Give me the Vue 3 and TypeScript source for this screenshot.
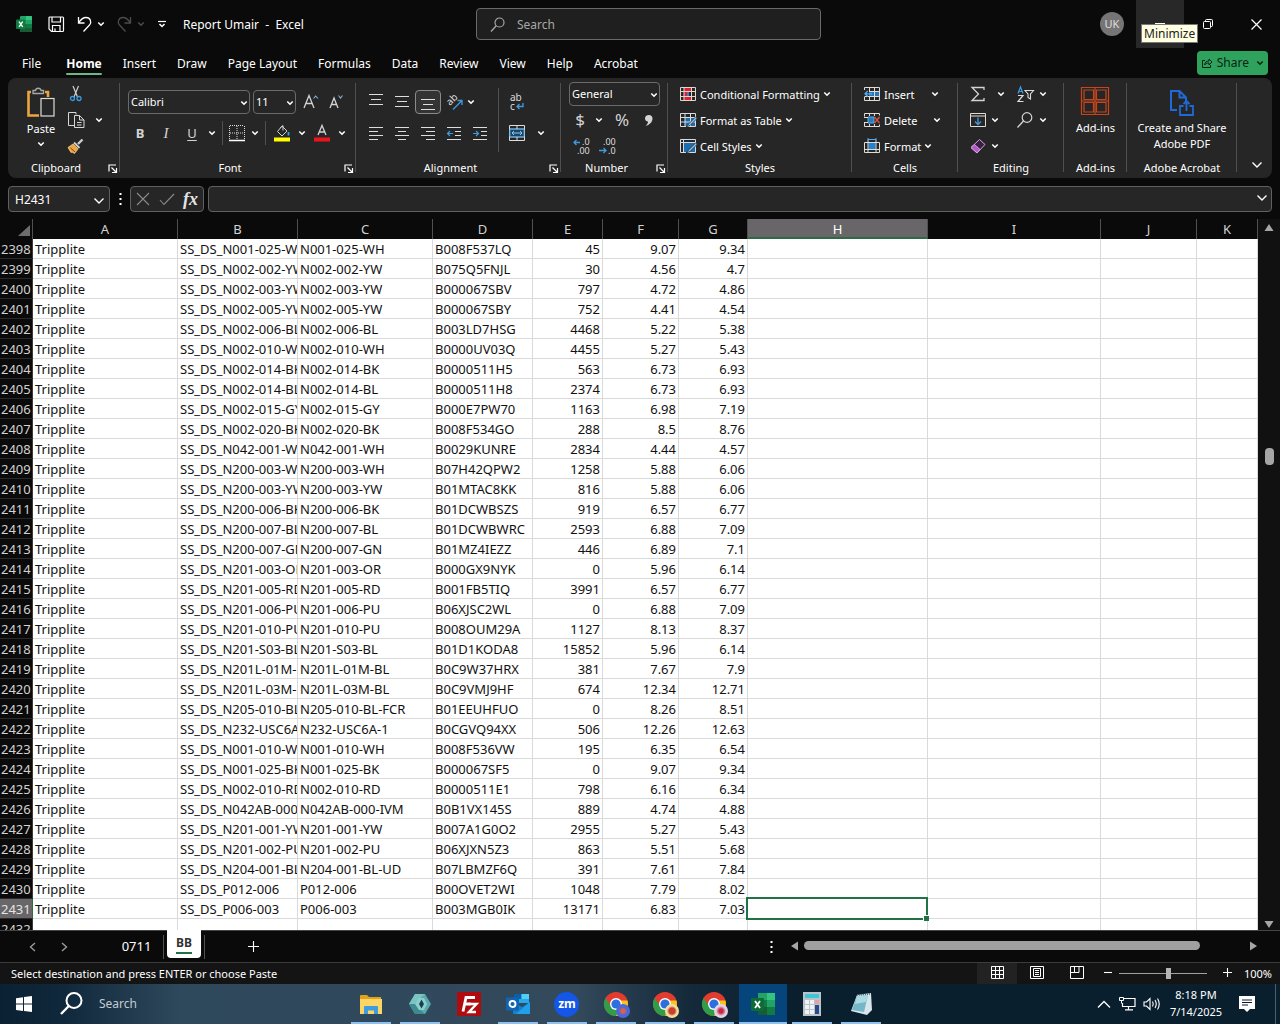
<script setup lang="ts">
import { h, ref } from 'vue'

const glyphs: Record<string, string> = {
  chev: '<path d="M1.300 1.500 4 4.200 6.700 1.500" stroke-width="1.600"/>',
  bigchev: '<path d="M1.500 1.500 6 6l4.500-4.500" stroke-width="1.400"/>',
  excel: '<rect x="4" y="0" width="12" height="16" rx="1" fill="#21a366" stroke="none"/><path d="M4 8h6v8H5q-1 0-1-1z" fill="#185c37" stroke="none"/><path d="M10 8h6v4h-6z" fill="#107c41" stroke="none"/><path d="M10 12h6v3q0 1-1 1h-5z" fill="#185c37" stroke="none"/><path d="M10 0h5q1 0 1 1v3h-6z" fill="#33c481" stroke="none"/><rect x="0" y="3.500" width="9.500" height="9.500" rx="1" fill="#107c41" stroke="none"/><path d="M3 5.700 6.700 10.800M6.700 5.700 3 10.800" stroke="#fff" stroke-width="1.400"/>',
  save: '<path d="M1 2q0-1 1-1h12.500q1 0 1 1v12.500q0 1-1 1H3.500L1 13z M4 1v5h8.500V1 M4.500 15.500v-6h7.500v6 M7 15.500v-3" stroke-width="1.200"/>',
  undo: '<path d="M1.500 1v6h6 M1.800 6.500C4.500 2.500 7 1.500 9 1.500c4.500 0 6 4.500 3.500 7.500L6.500 15.500" stroke-width="1.300"/>',
  redo: '<path d="M13.500 1v6h-6 M13.200 6.500C10.500 2.500 8 1.500 6 1.500c-4.500 0-6 4.500-3.500 7.500L8.500 15.500" stroke-width="1.300"/>',
  custom: '<path d="M1 1.500h8" stroke-width="1.200"/><path d="M2.500 4 5 6.500 7.500 4" stroke-width="1.500"/>',
  search: '<circle cx="9.500" cy="5.500" r="4.500" stroke-width="1.200"/><path d="M6.200 8.800 1 14.500" stroke-width="1.300"/>',
  minimize: '<path d="M0 .5h10"/>',
  restore: '<rect x=".5" y="2.500" width="7" height="7" rx="1"/><path d="M2.500 2.500V1.500q0-1 1-1h5q1 0 1 1v5q0 1-1 1h-1"/>',
  close: '<path d="M.5.5l10 10M10.500.5l-10 10" stroke-width="1.200"/>',
  share: '<path d="M4 3.500H1.500v7h8V8 M3.500 8C4 5 5.500 4 8 4V2l3 3-3 3V6C6 6 4.500 6.500 3.500 8z" stroke-width="1"/>',
  paste: '<path d="M5 5H2.500v23.500H13 M19 5h3v5" stroke="#eda63f" stroke-width="2.600"/><path d="M7 6V3.500h2.500C10 .500 14.500.500 15 3.500h2.500V6.500H7z" stroke="#a8a8a8" stroke-width="1.300" fill="#262626"/><rect x="15" y="11.500" width="13" height="17.500" stroke="#dcdcdc" stroke-width="1.200" fill="#262626"/>',
  cut: '<path d="M5 0 9.500 11M10.500 0 6 11" stroke="#d0d0d0" stroke-width="1.200"/><circle cx="4.500" cy="12.500" r="2" stroke="#3d9be0" stroke-width="1.300"/><circle cx="11" cy="12.500" r="2" stroke="#3d9be0" stroke-width="1.300"/>',
  copy: '<path d="M7 13.500H.5V.5h7.500v2 M6.500 3.500h5L16 8v7.500H6.500z M11.500 3.500V8H16 M9 10.500h4.500M9 13h4.500" stroke="#d8d8d8"/>',
  painter: '<path d="M14.500 1.500 10 6" stroke="#ccc" stroke-width="2.400"/><path d="M6 4.500 11.500 10" stroke="#ccc" stroke-width="2"/><path d="M5 6 10 11 6.500 15.500 4 14 3 14.500 0 9.500z" fill="#eda63f" stroke="#f3c98a" stroke-width=".8"/><path d="M2.500 10 7 14" stroke="#6a4a1c"/>',
  grow: '<path d="M1 14 6 1.500 11 14M2.800 9.500h6.500" stroke="#d4d4d4" stroke-width="1.300"/><path d="M10.500 4.500l2.200-2.500L15 4.500" stroke="#7db4de" stroke-width="1.100"/>',
  shrink: '<path d="M1 14 5 4l4 10M2.500 10.500h5" stroke="#d4d4d4" stroke-width="1.300"/><path d="M9.500 1.500 11.500 4l2-2.500" stroke="#7db4de" stroke-width="1.100"/>',
  borders: '<path d="M1 .5h14M1 8h14M.5 1v14M8 1v14M15.500 1v14" stroke="#ddd" stroke-dasharray="1 1"/><path d="M0 15.500h16" stroke="#fff" stroke-width="1.500"/>',
  fill: '<path d="M8 1 13 6 8 11 3.500 6.500z M6 3l3-2.500v5" stroke="#d0d0d0"/><path d="M14.500 7v3.500" stroke="#3d9be0" stroke-width="1.800"/><path d="M0 14.500h16" stroke="#ff0" stroke-width="4"/>',
  color: '<path d="M4 10 8 .500 12 10M5.500 7h5" stroke="#d4d4d4" stroke-width="1.300"/><path d="M0 14.500h16" stroke="#f0121c" stroke-width="4"/>',
  top: '<path d="M1 2.500h14M3 7.500h10M1 12.500h14" stroke="#ddd" stroke-width="1.200"/>',
  left: '<path d="M1 2.500h14M1 6.500h9M1 10.500h14M1 14.500h9" stroke="#ddd" stroke-width="1.200"/>',
  center: '<path d="M1 2.500h14M4 6.500h8M1 10.500h14M4 14.500h8" stroke="#ddd" stroke-width="1.200"/>',
  right: '<path d="M1 2.500h14M6 6.500h9M1 10.500h14M6 14.500h9" stroke="#ddd" stroke-width="1.200"/>',
  outdent: '<path d="M1 2.500h14M9 6.500h6M9 10.500h6M1 14.500h14" stroke="#ddd" stroke-width="1.200"/><path d="M7 8.500H1.500M4 6 1.500 8.500 4 11" stroke="#3d9be0" stroke-width="1.200"/>',
  indent: '<path d="M1 2.500h14M9 6.500h6M9 10.500h6M1 14.500h14" stroke="#ddd" stroke-width="1.200"/><path d="M1 8.500h5.500M4 6l2.500 2.500L4 11" stroke="#3d9be0" stroke-width="1.200"/>',
  orient: '<text font-size="10" font-family="Noto Sans, sans-serif" fill="#ddd" stroke="none" transform="translate(4 12) rotate(-45)">ab</text><path d="M7 15.500 15.500 7M11.500 6.500h4.500v4.500" stroke="#3d9be0" stroke-width="1.300"/>',
  wrap: '<text x="1" y="7" font-size="10" font-family="Noto Sans, sans-serif" fill="#ddd" stroke="none">ab</text><text x="1" y="16" font-size="10" font-family="Noto Sans, sans-serif" fill="#ddd" stroke="none">c</text><path d="M14 9v3.500H8M10.500 10 8 12.500 10.500 15" stroke="#3d9be0" stroke-width="1.300"/>',
  merge: '<path d="M.5.5h15v15H.5z M8 0v4M8 12v4 M.5 4h15M.5 12h15" stroke="#ddd"/><path d="M1 4.500h14v7H1z" fill="#17466b" stroke="#3d9be0"/><path d="M3 8h10M5 6 3 8l2 2M11 6l2 2-2 2" stroke="#8fc8f2"/>',
  comma: '<path d="M5 1C2.500 1 1 2.500 1 4.500s1.500 3 3 3c0 2-1 3-2.500 4.500 4-1 7-4 7-7.500C8.500 2.500 7 1 5 1z" fill="#d4d4d4" stroke="none"/>',
  decInc: '<path d="M7 4.500H1M3.500 2 1 4.500 3.500 7" stroke="#3d9be0" stroke-width="1.300"/><text x="9" y="7" font-size="9" font-family="Noto Sans, sans-serif" fill="#ddd" stroke="none">.0</text><text x="4" y="16" font-size="9" font-family="Noto Sans, sans-serif" fill="#ddd" stroke="none">.00</text>',
  decDec: '<path d="M0 12.500h7M4.500 10 7 12.500 4.500 15" stroke="#3d9be0" stroke-width="1.300"/><text x="4" y="7" font-size="9" font-family="Noto Sans, sans-serif" fill="#ddd" stroke="none">.00</text><text x="9" y="16" font-size="9" font-family="Noto Sans, sans-serif" fill="#ddd" stroke="none">.0</text>',
  cond: '<path d="M4 1h7v4H4zM4 11h7v4H4z" fill="#e0202c" stroke="none"/><path d="M4 5.500h3v5H4z" fill="#e0202c" stroke="none"/><path d="M7 5.500h2v5H7z" fill="#2f86cc" stroke="none"/><path d="M.5 1.500h15v13H.5z M4 1v14M11.500 1v14M.5 5.500h15M.5 10.500h15" stroke="#e2d6d2"/>',
  table: '<path d="M5 5h10v9H5z" fill="#1c6cb0" stroke="none"/><path d="M.5 1.500h15v13H.5z M5 1v14M10.500 1v14M.5 5.500h15M.5 10h15" stroke="#d8dce0"/><path d="M16 4.500 9 11.500l-3 3.500 4-1.500L16.500 7" fill="#8cc4ee" stroke="#262626" stroke-width=".8"/>',
  style: '<path d="M3 4h12v10H3z" fill="#1c6cb0" stroke="none"/><path d="M.5 1.500h15v13H.5z M3.500 1v14M.5 4.500h15" stroke="#d8dce0"/><path d="M16 4.500 9 11.500l-3 3.500 4-1.500L16.500 7" fill="#8cc4ee" stroke="#262626" stroke-width=".8"/>',
  insert: '<path d="M5 5h10.500v5H5z" fill="#2a78ba" stroke="none"/><path d="M.5 4V1.500h15v13H.5V11M5.500 1.500V5M10.500 1v14M5.500 10v4.500M5 5.500h10.500M.5 10.500h15" stroke="#e2dcd6"/><path d="M8 7.800H1M3.800 5 1 7.800l2.800 2.700" stroke="#53acf0" stroke-width="1.300"/>',
  delete: '<path d="M4 5h6v6H4z" fill="#2a78ba" stroke="#53acf0"/><path d="M.5 4.500v-3h15v2M.5 11v3.500h15v-2M5.500 1.500V4M10.500 1.500V4M5.500 12v2.500M10.500 12v2.500M0 5.500h4M0 10.500h4" stroke="#e2dcd6"/><path d="M10.500 5l5 6M15.500 5l-5 6" stroke="#e0533c" stroke-width="1.300"/>',
  format: '<path d="M4.500 5h7v6h-7z" fill="#2182d2" stroke="none"/><path d="M.5 4.500h15v10H.5z M4 2.500v12M12 2.500v12M.5 11.500h15" stroke="#e2dcd6"/><path d="M4 1.500h8M4 0v3M12 0v3" stroke="#53acf0"/>',
  sigma: '<path d="M14 4V1.500H2L8.500 8 2 14.500h12V12" stroke="#d4d4d4" stroke-width="1.300"/>',
  down: '<path d="M.5 1.500h15v13H.5zM.5 4h15" stroke="#e2dcd6"/><path d="M8 5.500V12M5 9.500 8 12.500l3-3" stroke="#3d9be0" stroke-width="1.300"/>',
  eraser: '<path d="M1 9.500 9.500 1.500 15 6.500 7 15z" fill="#3a1f42" stroke="#d9a0e4"/><path d="M1 9.500 4.500 6.500 10 11.500 7 15z" fill="#b45ac6" stroke="#d9a0e4"/>',
  sort: '<path d="M1 7.500 3.500 1 6 7.500M2 5.500h3" stroke="#3d9be0" stroke-width="1.200"/><path d="M1 9.500h5L1 15.500h5.500" stroke="#ddd" stroke-width="1.200"/><path d="M8 4.500h8.500L13.500 8v5l-2.500-1.500V8z" stroke="#ddd" stroke-width="1.100"/>',
  find: '<circle cx="10" cy="5.500" r="4.800" stroke="#d4d4d4" stroke-width="1.200"/><path d="M6.500 9 .5 15.500" stroke="#d4d4d4" stroke-width="1.300"/>',
  addins: '<path d="M.5.5h27v27H.5z M3 3h9.500v9.500H3z M15.500 3H25v9.500h-9.500z M3 15.500h9.500V25H3z M15.500 15.500H25V25h-9.500z M0 14h28M14 0v28" stroke="#c8451c" stroke-width="1.200"/>',
  pdf: '<path d="M7 20H1V1h8.500L16 7.500V11 M9.500 1v6.500H16" stroke="#1f6ad8" stroke-width="2"/><path d="M13.500 16H10v9h13v-9h-3.500 M16.500 21v-9.500M13.500 14l3-3 3 3" stroke="#1f6ad8" stroke-width="1.800"/>',
  launch: '<path d="M1 7.500V1h7 M3.500 3.500 8 8 M8.500 4v4.500H4" stroke-width="1.200"/>',
  cancel: '<path d="M1 1l12 12M13 1 1 13" stroke="#8a8a8a" stroke-width="1.100"/>',
  enter: '<path d="M1 7l4 4.500L15 1" stroke="#8a8a8a" stroke-width="1.100"/>',
  dots: '<path d="M1.500 1v2M1.500 6v2M1.500 11v2" stroke="#fff" stroke-width="2"/>',
  corner: '<path d="M12 0v11H0z" fill="#6d6d6d" stroke="none"/>',
  up: '<path d="M5 1 9.500 8H.5z" fill="#a6a6a6" stroke="none"/>',
  dn: '<path d="M5 8 9.500 1H.5z" fill="#a6a6a6" stroke="none"/>',
  lt: '<path d="M0 5 7 .5v9z" fill="#a6a6a6" stroke="none"/>',
  rt: '<path d="M8 5 1 .5v9z" fill="#a6a6a6" stroke="none"/>',
  prev: '<path d="M6 1 1.500 5 6 9" stroke="#9a9a9a" stroke-width="1.400"/>',
  next: '<path d="M1 1l4.500 4L1 9" stroke="#9a9a9a" stroke-width="1.400"/>',
  plus: '<path d="M0 5.500h11M5.500 0v11" stroke-width="1.100"/>',
  plusSmall: '<path d="M0 4.500h9M4.500 0v9" stroke-width="1.100"/>',
  minus: '<path d="M0 4.500h8" stroke-width="1.100"/>',
  normal: '<path d="M.5.5h12v12H.5z M4.500.5v12M8.500.5v12M.5 4.500h12M.5 8.500h12" stroke="#fff"/>',
  page: '<path d="M.5.5h13v12H.5z M3.500 2.500h7v8h-7z M5 4.500h4M5 6.500h4M5 8.500h4" stroke="#fff"/>',
  break: '<path d="M.5.5h13v12H.5z M4.500.5v6M9 .5v6H.5" stroke="#fff"/>',
  win: '<path d="M0 2.200 7 1.200V7.600H0z M8 1 16 0v7.600H8z M0 8.500h7v6.500L0 14z M8 8.500h8V16l-8-1z" fill="#fff" stroke="none"/>',
  bigsearch: '<circle cx="14" cy="8.500" r="7.500" stroke="#fff" stroke-width="2"/><path d="M8.800 14 1 22" stroke="#fff" stroke-width="2.400"/>',
  folder: '<path d="M1 4q0-1 1-1h6l2 2h12v17H1z" fill="#e3a21a" stroke="none"/><path d="M1 7h22v15H1z" fill="#fbd667" stroke="none"/><path d="M5 22v-7q0-1 1-1h12q1 0 1 1v7h-4v-3.500H9V22z" fill="#3f9be0" stroke="none"/>',
  hex: '<path d="M7 2h10l6 10-6 10H7L1 12z" fill="#5aa9ac" stroke="none"/><path d="M1 12 7 2h10l-6 5-4 5z" fill="#7cc4c2" stroke="none"/><path d="M1 12h6l4 5 6 5H7z" fill="#3f8a92" stroke="none"/><path d="M11 6h5l3 6-3 6h-5l-4-6z" fill="#8ccfce" stroke="none"/><path d="M13.500 7.500 16 12l-2.500 4.500L11 12z" fill="#17434e" stroke="none"/>',
  filezilla: '<path d="M0 0h24v24H0z" fill="#b00c10" stroke="none"/><path d="M6 19.500 9 5.500h9M7.500 12h6" stroke="#fff" stroke-width="2.800"/><path d="M12 12h7.500L12 20h7" stroke="#fff" stroke-width="2.400"/>',
  outlook: '<path d="M8 2h15v9H8z" fill="#28a8ea" stroke="none"/><path d="M8 2h7v5H8z" fill="#0a5fa8" stroke="none"/><path d="M16 2h7v5h-7z" fill="#50d0f5" stroke="none"/><path d="M7 10l9 5 8-5v12H7z" fill="#1480d0" stroke="none"/><path d="M24 10v12H10z" fill="#1fa0e8" stroke="none"/><rect x="0" y="5.500" width="13" height="13" rx="1" fill="#0f64b4" stroke="none"/><circle cx="6.500" cy="12" r="3" stroke="#fff" stroke-width="1.900"/>',
  chrome: '<circle cx="12" cy="12" r="12" fill="#e33b2e" stroke="none"/><path d="M1.600 6A12 12 0 0 0 12 24l5-9-8 2z" fill="#2f9e4a" stroke="none"/><path d="M23.500 8.500A12 12 0 0 1 12 24l5.500-11-3-4.500z" fill="#fac61c" stroke="none"/><circle cx="12" cy="12" r="6" fill="#fff" stroke="none"/><circle cx="12" cy="12" r="4.600" fill="#2b6fe0" stroke="none"/>',
  excelBig: '<path d="M7 1h17v22H7z" fill="#21a366" stroke="none"/><path d="M16 1h8v7h-8z" fill="#33c481" stroke="none"/><path d="M7 8h9v7H7z" fill="#107c41" stroke="none"/><path d="M7 15h17v8H7z" fill="#185c37" stroke="none"/><path d="M16 15h8v8h-8z" fill="#107c41" stroke="none"/><rect x="0" y="6" width="13" height="13" rx="1" fill="#0e6b38" stroke="none"/><path d="M4 9l5 7M9 9l-5 7" stroke="#fff" stroke-width="1.800"/>',
  calc: '<path d="M3 0h18v24H3z" fill="#b9c3c9" stroke="none"/><path d="M5 2h14v4H5z" fill="#3fc6d4" stroke="none"/><path d="M5 8h4v4H5zM10 8h4v4h-4zM5 13h4v4H5zM10 13h4v4h-4zM5 18h4v4H5zM10 18h4v4h-4z" fill="#eef2f4" stroke="none"/><path d="M15 8h4v4h-4z" fill="#e6a0a0" stroke="none"/><path d="M15 13h4v9h-4z" fill="#284a8c" stroke="none"/>',
  notepad: '<path d="M8 3 22 1 23 18 18 23 2 19z" fill="#d6e6ea" stroke="none"/><path d="M8 4 19 3 15 20 3 18z" fill="#76b6c6" stroke="none"/><path d="M8 4l11-1-2 7-11 2z" fill="#a9dbe4" stroke="none"/><path d="M8 3l13-1" stroke="#5c6870" stroke-width="1.500" stroke-dasharray="1 1"/>',
  tray: '<path d="M1 7.500 7 1.500l6 6" stroke="#fff" stroke-width="1.300"/>',
  net: '<path d="M5 1.500h11v8H3.500V6 M9.500 9.500v3M6 12.800h8" stroke="#fff" stroke-width="1.200"/><path d="M.5.5h4v3h-4zM2.500 3.500v3" stroke="#fff"/>',
  vol: '<path d="M1 5h2.500L7 1.500v11L3.500 9H1z M9.500 4.500q1.500 2.500 0 5M12 3q2.500 4 0 8M14.500 1.500q3.500 5.500 0 11" stroke="#fff" stroke-width="1.100"/>',
  note: '<path d="M0 0h16v13h-5l-3 3-3-3H0z" fill="#fff" stroke="none"/><path d="M3 4h10M3 6.500h10M3 9h6" stroke="#0a1f2e"/>',
}

interface IconProps { name: string; w?: number; h?: number }
const Icon = (p: IconProps) => {
  const w = p.w ?? 16
  const hh = p.h ?? 16
  return h('svg', {
    width: w, height: hh, viewBox: `0 0 ${w} ${hh}`,
    fill: 'none', stroke: 'currentColor', 'aria-hidden': 'true', innerHTML: glyphs[p.name],
  })
}
Icon.props = ['name', 'w', 'h']

const tabs = ['File', 'Home', 'Insert', 'Draw', 'Page Layout', 'Formulas', 'Data', 'Review', 'View', 'Help', 'Acrobat']
const columns = ['A', 'B', 'C', 'D', 'E', 'F', 'G', 'H', 'I', 'J', 'K']
const zoom = ref(57)

// SKU suffix, part number, ASIN, stock, cost, price
const source = `
N001-025-WH|N001-025-WH|B008F537LQ|45|9.07|9.34
N002-002-YW|N002-002-YW|B075Q5FNJL|30|4.56|4.7
N002-003-YW|N002-003-YW|B000067SBV|797|4.72|4.86
N002-005-YW|N002-005-YW|B000067SBY|752|4.41|4.54
N002-006-BL|N002-006-BL|B003LD7HSG|4468|5.22|5.38
N002-010-WH|N002-010-WH|B0000UV03Q|4455|5.27|5.43
N002-014-BK|N002-014-BK|B0000511H5|563|6.73|6.93
N002-014-BL|N002-014-BL|B0000511H8|2374|6.73|6.93
N002-015-GY|N002-015-GY|B000E7PW70|1163|6.98|7.19
N002-020-BK|N002-020-BK|B008F534GO|288|8.5|8.76
N042-001-WH|N042-001-WH|B0029KUNRE|2834|4.44|4.57
N200-003-WH|N200-003-WH|B07H42QPW2|1258|5.88|6.06
N200-003-YW|N200-003-YW|B01MTAC8KK|816|5.88|6.06
N200-006-BK|N200-006-BK|B01DCWBSZS|919|6.57|6.77
N200-007-BL|N200-007-BL|B01DCWBWRC|2593|6.88|7.09
N200-007-GN|N200-007-GN|B01MZ4IEZZ|446|6.89|7.1
N201-003-OR|N201-003-OR|B000GX9NYK|0|5.96|6.14
N201-005-RD|N201-005-RD|B001FB5TIQ|3991|6.57|6.77
N201-006-PU|N201-006-PU|B06XJSC2WL|0|6.88|7.09
N201-010-PU|N201-010-PU|B008OUM29A|1127|8.13|8.37
N201-S03-BL|N201-S03-BL|B01D1KODA8|15852|5.96|6.14
N201L-01M-BL|N201L-01M-BL|B0C9W37HRX|381|7.67|7.9
N201L-03M-BL|N201L-03M-BL|B0C9VMJ9HF|674|12.34|12.71
N205-010-BL-FCR|N205-010-BL-FCR|B01EEUHFUO|0|8.26|8.51
N232-USC6A-1|N232-USC6A-1|B0CGVQ94XX|506|12.26|12.63
N001-010-WH|N001-010-WH|B008F536VW|195|6.35|6.54
N001-025-BK|N001-025-BK|B000067SF5|0|9.07|9.34
N002-010-RD|N002-010-RD|B0000511E1|798|6.16|6.34
N042AB-000-IVM|N042AB-000-IVM|B0B1VX145S|889|4.74|4.88
N201-001-YW|N201-001-YW|B007A1G0O2|2955|5.27|5.43
N201-002-PU|N201-002-PU|B06XJXN5Z3|863|5.51|5.68
N204-001-BL-UD|N204-001-BL-UD|B07LBMZF6Q|391|7.61|7.84
P012-006|P012-006|B00OVET2WI|1048|7.79|8.02
P006-003|P006-003|B003MGB0IK|13171|6.83|7.03`
const rows = source.trim().split('\n').map((line, i) => {
  const c = line.split('|')
  return { n: 2398 + i, cells: ['Tripplite', 'SS_DS_' + c[0], ...c.slice(1)] }
})
rows.push({ n: 2432, cells: ['', '', '', '', '', '', ''] })

const apps = [
  { icon: 'folder', label: 'File Explorer', open: true },
  { icon: 'hex', label: 'Browser', open: true },
  { icon: 'filezilla', label: 'FileZilla', open: false },
  { icon: 'outlook', label: 'Outlook', open: true },
  { icon: 'zoom', label: 'Zoom', open: true },
  { icon: 'chrome', label: 'Chrome', open: true, badge: 'blue' },
  { icon: 'chrome', label: 'Chrome', open: true, badge: 'cream' },
  { icon: 'chrome', label: 'Chrome', open: true, badge: 'pink' },
  { icon: 'excelBig', label: 'Excel', open: true, active: true },
  { icon: 'calc', label: 'Calculator', open: true },
  { icon: 'notepad', label: 'Notepad', open: true },
]
</script>

<template>
  <div class="screen">
    <header class="titlebar">
      <div class="quick">
        <Icon name="excel" class="logo" />
        <button class="ic save" aria-label="Save"><Icon name="save" :w="17" :h="17" /></button>
        <button class="ic undo" aria-label="Undo"><Icon name="undo" :w="15" /><Icon name="chev" :w="8" :h="6" /></button>
        <button class="ic redo" aria-label="Redo"><Icon name="redo" :w="15" /><Icon name="chev" :w="8" :h="6" /></button>
        <button class="ic custom" aria-label="Customize toolbar"><Icon name="custom" :w="10" :h="8" /></button>
        <span class="doc">Report Umair&nbsp; -&nbsp; Excel</span>
      </div>
      <label class="finder">
        <Icon name="search" :w="15" :h="15" />
        <input type="text" placeholder="Search" aria-label="Search" />
      </label>
      <div class="window">
        <button class="avatar" aria-label="Account">UK</button>
        <button class="winbtn hover" aria-label="Minimize"><Icon name="minimize" :w="10" :h="3" /><span class="tip">Minimize</span></button>
        <button class="winbtn" aria-label="Restore"><Icon name="restore" :w="10" :h="10" /></button>
        <button class="winbtn" aria-label="Close"><Icon name="close" :w="11" :h="11" /></button>
      </div>
    </header>

    <nav class="tabs">
      <button v-for="t in tabs" :key="t" class="tab" :class="{ on: t === 'Home', file: t === 'File' }">{{ t }}</button>
      <button class="share"><Icon name="share" :w="12" :h="12" />Share<Icon name="chev" :w="8" :h="6" /></button>
    </nav>

    <section class="ribbon">
      <div class="group clipboard">
        <div class="body">
          <button class="big"><Icon name="paste" :w="30" :h="30" /><span>Paste</span><Icon name="chev" :w="8" :h="6" /></button>
          <div class="stack">
            <button class="ic" aria-label="Cut"><Icon name="cut" /></button>
            <button class="ic" aria-label="Copy"><Icon name="copy" /><Icon name="chev" class="far" :w="8" :h="6" /></button>
            <button class="ic" aria-label="Format Painter"><Icon name="painter" /></button>
          </div>
        </div>
        <div class="foot"><span>Clipboard</span><button class="ic" aria-label="Clipboard settings"><Icon name="launch" :w="9" :h="9" /></button></div>
      </div>

      <div class="group font">
        <div class="body two">
          <div class="row">
            <span class="field family"><select aria-label="Font"><option>Calibri</option></select><Icon name="chev" :w="8" :h="6" /></span>
            <span class="field size"><select aria-label="Font size"><option>11</option></select><Icon name="chev" :w="8" :h="6" /></span>
            <button class="ic b26" aria-label="Increase font size"><Icon name="grow" /></button>
            <button class="ic b26" aria-label="Decrease font size"><Icon name="shrink" /></button>
          </div>
          <div class="row second">
            <button class="ic b26 bold">B</button>
            <button class="ic b26 ital">I</button>
            <button class="ic b26 under">U</button>
            <button class="ic b14" aria-label="Underline options"><Icon name="chev" :w="8" :h="6" /></button>
            <i class="bar"></i>
            <button class="ic b22" aria-label="Borders"><Icon name="borders" /></button>
            <button class="ic b14" aria-label="Border options"><Icon name="chev" :w="8" :h="6" /></button>
            <i class="bar"></i>
            <button class="ic b26" aria-label="Fill color"><Icon name="fill" :h="17" /></button>
            <button class="ic b14" aria-label="Fill options"><Icon name="chev" :w="8" :h="6" /></button>
            <button class="ic b26" aria-label="Font color"><Icon name="color" :h="17" /></button>
            <button class="ic b14" aria-label="Font color options"><Icon name="chev" :w="8" :h="6" /></button>
          </div>
        </div>
        <div class="foot"><span>Font</span><button class="ic" aria-label="Font settings"><Icon name="launch" :w="9" :h="9" /></button></div>
      </div>

      <div class="group align">
        <div class="body">
          <div class="two">
            <div class="row">
              <button class="ic b26 raise" aria-label="Top align"><Icon name="top" /></button>
              <button class="ic b26" aria-label="Middle align"><Icon name="top" /></button>
              <button class="ic b26 boxed" aria-label="Bottom align"><Icon name="top" /></button>
              <button class="ic b26" aria-label="Orientation"><Icon name="orient" /></button>
              <button class="ic b8" aria-label="Orientation options"><Icon name="chev" :w="8" :h="6" /></button>
            </div>
            <div class="row">
              <button v-for="n in ['left', 'center', 'right', 'outdent', 'indent']" :key="n" class="ic b26" :aria-label="n"><Icon :name="n" /></button>
            </div>
          </div>
          <i class="bar tall"></i>
          <div class="two">
            <div class="row"><button class="ic b26" aria-label="Wrap text"><Icon name="wrap" /></button></div>
            <div class="row"><button class="ic b26" aria-label="Merge"><Icon name="merge" /></button><button class="ic b22" aria-label="Merge options"><Icon name="chev" :w="8" :h="6" /></button></div>
          </div>
        </div>
        <div class="foot"><span>Alignment</span><button class="ic" aria-label="Alignment settings"><Icon name="launch" :w="9" :h="9" /></button></div>
      </div>

      <div class="group number">
        <div class="body stack">
          <div class="row"><span class="field"><select aria-label="Number format"><option>General</option></select><Icon name="chev" :w="8" :h="6" /></span></div>
          <div class="row">
            <button class="ic b22 sym">$</button>
            <button class="ic b16" aria-label="Currency options"><Icon name="chev" :w="8" :h="6" /></button>
            <button class="ic b30 sym">%</button>
            <button class="ic b22" aria-label="Comma style"><Icon name="comma" :w="9" :h="13" /></button>
          </div>
          <div class="row">
            <button class="ic b26" aria-label="Increase decimal"><Icon name="decInc" :w="18" /></button>
            <button class="ic b26" aria-label="Decrease decimal"><Icon name="decDec" :w="18" /></button>
          </div>
        </div>
        <div class="foot"><span>Number</span><button class="ic" aria-label="Number settings"><Icon name="launch" :w="9" :h="9" /></button></div>
      </div>

      <div class="group styles">
        <div class="body stack">
          <button class="item"><Icon name="cond" /><span>Conditional Formatting</span><Icon name="chev" :w="8" :h="6" /></button>
          <button class="item"><Icon name="table" /><span>Format as Table</span><Icon name="chev" :w="8" :h="6" /></button>
          <button class="item"><Icon name="style" /><span>Cell Styles</span><Icon name="chev" :w="8" :h="6" /></button>
        </div>
        <div class="foot"><span>Styles</span></div>
      </div>

      <div class="group cells">
        <div class="body stack">
          <button class="item split"><Icon name="insert" /><span>Insert</span><Icon name="chev" :w="8" :h="6" /></button>
          <button class="item split"><Icon name="delete" /><span>Delete</span><Icon name="chev" :w="8" :h="6" /></button>
          <button class="item"><Icon name="format" /><span>Format</span><Icon name="chev" :w="8" :h="6" /></button>
        </div>
        <div class="foot"><span>Cells</span></div>
      </div>

      <div class="group editing">
        <div class="body">
          <div class="stack">
            <button class="item wide" aria-label="AutoSum"><Icon name="sigma" /><Icon name="chev" :w="8" :h="6" /></button>
            <button class="item" aria-label="Fill"><Icon name="down" /><Icon name="chev" :w="8" :h="6" /></button>
            <button class="item" aria-label="Clear"><Icon name="eraser" /><Icon name="chev" :w="8" :h="6" /></button>
          </div>
          <div class="stack">
            <button class="item" aria-label="Sort and filter"><Icon name="sort" :w="17" /><Icon name="chev" :w="8" :h="6" /></button>
            <button class="item" aria-label="Find"><Icon name="find" :w="17" /><Icon name="chev" :w="8" :h="6" /></button>
          </div>
        </div>
        <div class="foot"><span>Editing</span></div>
      </div>

      <div class="group addins">
        <div class="body"><button class="big"><Icon name="addins" :w="28" :h="28" /><span>Add-ins</span></button></div>
        <div class="foot"><span>Add-ins</span></div>
      </div>

      <div class="group acrobat">
        <div class="body"><button class="big"><Icon name="pdf" :w="24" :h="26" /><span>Create and Share<br />Adobe PDF</span></button></div>
        <div class="foot"><span>Adobe Acrobat</span></div>
      </div>

      <div class="rest"><button class="ic" aria-label="Collapse ribbon"><Icon name="bigchev" :w="12" :h="8" /></button></div>
    </section>

    <section class="formula">
      <span class="field name"><input type="text" value="H2431" aria-label="Name box" /><Icon name="bigchev" :w="12" :h="8" /></span>
      <Icon name="dots" :w="3" :h="14" />
      <div class="fx">
        <button class="ic" aria-label="Cancel"><Icon name="cancel" :w="14" :h="14" /></button>
        <button class="ic" aria-label="Enter"><Icon name="enter" :w="16" :h="13" /></button>
        <button class="ic fn" aria-label="Insert function">fx</button>
      </div>
      <span class="field entry"><input type="text" aria-label="Formula" /><Icon name="bigchev" :w="12" :h="8" /></span>
    </section>

    <main class="sheet">
      <div class="grid">
        <table>
          <colgroup><col class="cn" /><col v-for="c in columns" :key="c" :class="'c' + c" /></colgroup>
          <thead>
            <tr>
              <th class="all"><Icon name="corner" :w="12" :h="11" /></th>
              <th v-for="c in columns" :key="c" scope="col" :class="{ picked: c === 'H' }">{{ c }}</th>
            </tr>
          </thead>
          <tbody>
            <tr v-for="r in rows" :key="r.n">
              <th scope="row" :class="{ picked: r.n === 2431 }">{{ r.n }}</th>
              <td v-for="(v, i) in r.cells" :key="i" :class="{ num: i > 3 }">{{ v }}</td>
              <td :class="{ active: r.n === 2431 }"></td><td></td><td></td><td></td>
            </tr>
          </tbody>
        </table>
      </div>
      <div class="vscroll"><Icon name="up" :w="10" :h="9" /><i></i><Icon name="dn" :w="10" :h="9" /></div>
    </main>

    <div class="sheetbar">
      <button class="ic nav" aria-label="Previous sheet"><Icon name="prev" :w="7" :h="10" /></button>
      <button class="ic nav" aria-label="Next sheet"><Icon name="next" :w="7" :h="10" /></button>
      <button class="ic other">0711</button>
      <i class="bar"></i>
      <button class="current"><span>BB</span></button>
      <i class="bar"></i>
      <button class="ic add" aria-label="New sheet"><Icon name="plus" :w="11" :h="11" /></button>
      <Icon name="dots" class="grip" :w="3" :h="14" />
      <div class="hscroll"><Icon name="lt" :w="8" :h="10" /><div class="track"><i></i></div><Icon name="rt" :w="8" :h="10" /></div>
    </div>

    <footer class="status">
      <span class="msg">Select destination and press ENTER or choose Paste</span>
      <button class="view on" aria-label="Normal"><Icon name="normal" :w="13" :h="13" /></button>
      <button class="view" aria-label="Page layout"><Icon name="page" :w="14" :h="13" /></button>
      <button class="view" aria-label="Page break"><Icon name="break" :w="14" :h="13" /></button>
      <button class="ic b22" aria-label="Zoom out"><Icon name="minus" :w="8" :h="9" /></button>
      <input v-model="zoom" type="range" min="0" max="100" aria-label="Zoom" />
      <button class="ic b22" aria-label="Zoom in"><Icon name="plusSmall" :w="9" :h="9" /></button>
      <span class="pct">100%</span>
    </footer>

    <div class="taskbar">
      <button class="ic start" aria-label="Start"><Icon name="win" /></button>
      <button class="ic tsearch"><Icon name="bigsearch" :w="23" :h="24" /><span>Search</span></button>
      <div class="apps">
        <button v-for="(a, i) in apps" :key="i" class="app" :class="{ open: a.open, active: a.active }" :aria-label="a.label">
          <span v-if="a.icon === 'zoom'" class="zm">zm</span>
          <Icon v-else :name="a.icon" :w="24" :h="24" />
          <i v-if="a.badge" class="badge" :class="a.badge"></i>
        </button>
      </div>
      <div class="tray">
        <button class="ic" aria-label="Hidden icons"><Icon name="tray" :w="14" :h="9" /></button>
        <button class="ic" aria-label="Network"><Icon name="net" :h="14" /></button>
        <button class="ic" aria-label="Volume"><Icon name="vol" :w="17" :h="14" /></button>
        <button class="ic clock"><span>8:18 PM</span><span>7/14/2025</span></button>
        <button class="ic notes" aria-label="Notifications"><Icon name="note" /></button>
        <i class="desk"></i>
      </div>
    </div>
  </div>
</template>

<style>
body { margin: 0; background: #0a0a0a; }
</style>

<style scoped>
.screen { display: flex; flex-direction: column; height: 100vh; overflow: hidden; background: #0a0a0a; color: #fff; font: 12px/16px "Noto Sans", "Open Sans", sans-serif; }
.screen *, .screen *::after { box-sizing: border-box; }
svg { display: block; flex: none; overflow: visible; }
button { margin: 0; padding: 0; border: 0; background: none; color: inherit; font: inherit; white-space: nowrap; }
input, select { margin: 0; border: 0; background: none; color: inherit; font: inherit; outline: 0; min-width: 0; }
.ic { display: flex; align-items: center; justify-content: center; flex: none; }
.b8 { width: 8px; } .b14 { width: 14px; } .b16 { width: 16px; } .b22 { width: 22px; } .b26 { width: 26px; } .b30 { width: 30px; }
.bar { flex: none; width: 1px; height: 24px; background: #505050; }

.titlebar { flex: none; display: grid; grid-template-columns: 1fr 345px 459px; height: 48px; align-items: center; }
.quick { display: flex; align-items: center; padding-left: 16px; }
.save { margin-left: 16px; }
.undo { margin-left: 12px; gap: 5px; }
.redo { margin-left: 12px; gap: 5px; color: #4c4c4c; }
.custom { margin-left: 12px; }
.doc { margin-left: 16px; padding-top: 1px; }
.finder { display: flex; align-items: center; gap: 12px; height: 32px; padding: 1px 13px 0; border: 1px solid #6a6a6a; border-radius: 4px; background: #1f1f1f; color: #a8a8a8; }
.finder input { flex: 1; padding: 0; }
.finder input::placeholder { color: #a8a8a8; opacity: 1; }
.window { display: flex; align-items: center; justify-content: flex-end; }
.avatar { width: 24px; height: 24px; margin-right: 12px; border-radius: 12px; background: #767474; color: #dedede; font-size: 11px; }
.winbtn { position: relative; display: flex; align-items: center; justify-content: center; width: 48px; height: 48px; }
.hover { background: #282828; z-index: 1; }
.tip { position: absolute; left: 5px; top: 24px; height: 19px; padding: 0 2px; border: 1px solid #777; background: #ffffe1; color: #222; line-height: 17px; }

.tabs { flex: none; display: flex; gap: 1px; height: 30px; padding: 0 12px; }
.tab { position: relative; height: 30px; padding: 2px 10px 0; }
.file { margin-right: 4px; }
.on { font-weight: 700; }
.tab.on::after { content: ""; position: absolute; left: 10px; right: 10px; bottom: 3px; height: 2px; background: #6fb58c; border-radius: 1px; }
.share { display: flex; align-items: center; gap: 4px; height: 24px; margin: 3px 0 0 auto; padding: 0 4px; border-radius: 4px; background: #2fa35e; color: #0a2413; }
.share svg:last-child { margin-left: 3px; }

.ribbon { flex: none; display: flex; height: 100px; margin: 0 8px; border-radius: 8px; background: #262626; font-size: 11px; }
.group { position: relative; display: flex; flex-direction: column; flex: none; }
.group::after { content: ""; position: absolute; right: 0; top: 5px; bottom: 6px; width: 1px; background: #505050; }
.body { display: flex; height: 81px; padding-top: 3px; }
.foot { display: flex; height: 19px; line-height: 18px; }
.foot span { flex: 1; text-align: center; }
.foot .ic { width: 16px; }
.row { display: flex; align-items: center; height: 26px; }
.stack { display: flex; flex-direction: column; }
.stack > .ic { height: 26px; justify-content: flex-start; }
.two { display: flex; flex-direction: column; gap: 5px; padding-top: 8px; }
.body.two { padding-top: 11px; }
.big { display: flex; flex-direction: column; align-items: center; padding-top: 6px; }
.item { display: flex; align-items: center; gap: 4px; height: 26px; }
.item > svg:last-child { margin-left: -1px; }
.item > span { padding-top: 1px; }
.field { position: relative; display: flex; height: 24px; border: 1px solid #6a6a6a; border-radius: 4px; }
.field > select, .field > input { flex: 1; width: 100%; appearance: none; padding: 0 2px; }
.field > svg { position: absolute; right: 1px; top: 9px; pointer-events: none; }

.clipboard { width: 112px; }
.clipboard .body { padding-left: 16px; }
.clipboard .big { width: 34px; gap: 4px; }
.clipboard .stack { margin-left: 10px; }
.far { margin-left: 11px; }
.font { width: 236px; }
.font .body { padding-left: 8px; }
.family { width: 122px; margin-right: 3px; }
.size { width: 43px; }
.size + .ic { margin-left: 2px; }
.second { margin-left: -1px; }
.second .bar { margin: 0 3px; }
.bold, .ital, .under { color: #d4d4d4; font-size: 13px; }
.bold { font-weight: 700; }
.ital { font-family: "Liberation Serif", serif; font-style: italic; font-size: 15px; }
.under { text-decoration: underline; text-underline-offset: 2px; }
.align { width: 205px; }
.align .body { padding-left: 7px; }
.align .body > .two { padding-top: 8px; }
.boxed { height: 24px; border: 1px solid #8a8a8a; border-radius: 4px; background: #333; }
.boxed svg { margin-top: 6px; }
.raise svg { margin-top: -4px; }
.tall { height: 64px; margin: 7px 5px 0; }
.number { width: 107px; }
.number .body { padding-left: 8px; }
.number .field { width: 91px; }
.sym { color: #d4d4d4; font-size: 17px; }
.styles { width: 184px; }
.styles .body, .cells .body, .editing .body { padding-left: 12px; }
.cells, .editing { width: 106px; }
.split > svg:last-child { margin-left: 12px; }
.editing .stack { width: 51px; }
.editing .item > svg:last-child { margin-left: 1px; }
.editing .wide > svg:last-child { margin-left: 7px; }
.addins { width: 63px; }
.acrobat { width: 110px; }
.addins .body, .acrobat .body { justify-content: center; }
.addins .big { gap: 5px; }
.acrobat .big { padding-top: 9px; gap: 4px; }
.rest { display: flex; flex: 1; align-items: flex-end; justify-content: flex-end; padding: 0 9px 9px 0; }

.formula { flex: none; display: flex; align-items: center; height: 41px; padding: 1px 8px 0; }
.formula .field, .fx { height: 26px; background: #262626; border: 1px solid #606060; border-radius: 4px; }
.formula .name { width: 102px; margin-right: 9px; }
.name > input { padding: 2px 6px 0; }
.name > svg { right: 4px; top: 10px; }
.fx { display: flex; align-items: center; width: 74px; margin: 0 4px 0 8px; padding: 0 5px; justify-content: space-between; }
.fn { color: #e4e4e4; font: italic 700 18px/20px "Liberation Serif", serif; }
.formula .entry { flex: 1; }
.entry > svg { right: 3px; top: 7px; }

.sheet { flex: 1; min-height: 0; display: flex; overflow: hidden; }
.grid { flex: 1; min-width: 0; overflow: hidden; background: #fff; }
table { width: 100%; table-layout: fixed; border-collapse: separate; border-spacing: 0; font-size: 13px; line-height: 17px; color: #111; }
.cn { width: 33px; } .cA { width: 145px; } .cB { width: 120px; } .cC { width: 135px; } .cD { width: 100px; } .cE { width: 70px; }
.cF { width: 76px; } .cG { width: 69px; } .cH { width: 180px; } .cI { width: 173px; } .cJ { width: 96px; }
th, td { height: 20px; padding: 2px 2px 0; overflow: hidden; white-space: nowrap; }
th { background: #0a0a0a; color: #d2d2d2; font-weight: 400; }
thead th { padding: 0; border-right: 1px solid #505050; }
thead th.picked { background: linear-gradient(0deg, #2d6b47 0 2px, #686668 2px); color: #fff; }
.all svg { margin: 3px 0 0 18px; }
tbody th { padding: 2px 2px 0 1px; text-align: right; border-right: 1px solid #3a3a3a; border-bottom: 1px solid #2a2a2a; }
tbody th.picked { background: #686668; color: #e4e4e4; border-right-color: #2d6b47; }
td { border-right: 1px solid #dadada; border-bottom: 1px solid #dadada; }
.num { text-align: right; }
td.active { position: relative; overflow: visible; }
td.active::before { content: ""; position: absolute; inset: -2px -1px -2px -2px; border: 2px solid #217346; }
td.active::after { content: ""; position: absolute; right: -2px; bottom: -3px; width: 6px; height: 6px; background: #217346; border: 1px solid #fff; border-width: 1px 0 0 1px; }
.vscroll { flex: none; display: flex; flex-direction: column; align-items: center; width: 22px; padding: 4px 0 1px; background: #111; }
.vscroll i { width: 9px; height: 17px; margin: 216px 0 auto; border-radius: 4px; background: #a6a6a6; }

.sheetbar { flex: none; display: flex; align-items: center; height: 32px; border-top: 1px solid #444; }
.nav { width: 32px; height: 31px; }
.nav:first-child { margin-left: 16px; }
.other { width: 83px; padding: 0 0 2px 30px; font-size: 13px; }
.current { align-self: flex-start; width: 34px; height: 28px; margin: -1px 3px 0; border-radius: 0 0 4px 4px; background: #fff; color: #333; font-weight: 700; }
.current span { display: inline-block; padding-bottom: 1px; border-bottom: 2px solid #217346; }
.add { width: 96px; }
.grip { margin-left: auto; }
.hscroll { display: flex; align-items: center; flex: 0 0 489px; margin-left: 18px; padding: 0 23px 2px 0; }
.track { flex: 1; margin: 0 1px 0 5px; padding-right: 48px; }
.track i { display: block; height: 9px; border-radius: 5px; background: #a0a0a0; }

.status { flex: none; display: flex; align-items: center; height: 22px; padding: 0 8px 0 11px; border-top: 1px solid #3c3c3c; background: #141414; font-size: 11px; }
.msg { flex: 1; }
.view { display: flex; align-items: center; justify-content: center; width: 40px; height: 21px; padding-bottom: 2px; }
.view.on { background: #222; }
.status .ic { padding-bottom: 2px; }
.status input { appearance: none; width: 88px; height: 21px; padding-bottom: 1px; margin-right: 9px; }
.status input::-webkit-slider-runnable-track { height: 1px; background: #a0a0a0; }
.status input::-webkit-slider-thumb { appearance: none; width: 5px; height: 11px; margin-top: -5px; background: #b4b4b4; }
.pct { width: 34px; text-align: right; }

.taskbar { flex: none; display: flex; height: 40px; background: linear-gradient(90deg, #0a2133 0, #10283b 5%, #2e485c 14%, #33495c 45%, #14293a 54%, #0a1f2e 62%, #0a1f2e 100%); }
.start { width: 48px; }
.tsearch { gap: 16px; margin-left: 12px; color: #c4ccd4; }
.apps { display: flex; gap: 1px; margin: 0 auto 0 210px; }
.app { position: relative; display: flex; align-items: center; justify-content: center; width: 48px; height: 40px; }
.open::after { content: ""; position: absolute; left: 4px; right: 4px; bottom: 0; height: 2px; background: #8ec1f0; }
.active.app { background: #06457c; }
.active.open::after { left: 0; right: 0; }
.zm { width: 25px; height: 25px; border-radius: 13px; background: #1456e8; color: #fff; font-weight: 700; font-size: 12px; line-height: 23px; }
.badge { position: absolute; left: 24px; top: 20px; width: 14px; height: 14px; border-radius: 7px; }
.blue { background: radial-gradient(circle, #d8604c 0 2px, #4a68d8 4px); }
.cream { background: radial-gradient(circle, #c8402c 0 3px, #f4dca0 5px); }
.pink { background: radial-gradient(circle, #cc2440 0 2px, #e0d4e8 5px); }
.tray { display: flex; align-items: center; gap: 8px; }
.tray .ic { height: 40px; }
.clock { flex-direction: column; width: 56px; font-size: 11px; line-height: 17px; }
.tray .clock { padding-bottom: 2px; }
.notes { margin-left: 7px; }
.desk { width: 1px; height: 40px; margin: 0 4px 0 12px; background: #4c6070; }
</style>
